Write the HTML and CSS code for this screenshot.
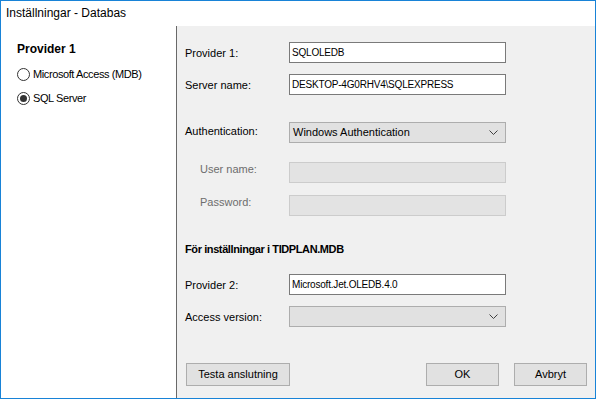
FILE: index.html
```html
<!DOCTYPE html>
<html lang="sv">
<head>
<meta charset="utf-8">
<title>Inställningar - Databas</title>
<link rel="stylesheet" href="styles.css">
</head>
<body>
<div class="window">
  <div class="titlebar">Inställningar - Databas</div>
  <div class="content">
    <div class="left">
      <div class="group-title">Provider 1</div>
      <div class="radio"><span class="circle"></span><span>Microsoft Access (MDB)</span></div>
      <div class="radio checked"><span class="circle"></span><span>SQL Server</span></div>
    </div>
    <div class="right">
      <div class="row r1"><span class="lbl">Provider 1:</span><div class="field input">SQLOLEDB</div></div>
      <div class="row r2"><span class="lbl">Server name:</span><div class="field input">DESKTOP-4G0RHV4\SQLEXPRESS</div></div>
      <div class="row r3"><span class="lbl">Authentication:</span><div class="field select">Windows Authentication<svg class="chev" width="9" height="5" viewBox="0 0 9 5"><path d="M0.5 0.5 L4.5 4.5 L8.5 0.5" fill="none" stroke="#404040" stroke-width="1"/></svg></div></div>
      <div class="row r4"><span class="lbl disabled">User name:</span><div class="field input-disabled"></div></div>
      <div class="row r5"><span class="lbl disabled">Password:</span><div class="field input-disabled"></div></div>
      <div class="heading">För inställningar i TIDPLAN.MDB</div>
      <div class="row r6"><span class="lbl">Provider 2:</span><div class="field input">Microsoft.Jet.OLEDB.4.0</div></div>
      <div class="row r7"><span class="lbl">Access version:</span><div class="field select"><svg class="chev" width="9" height="5" viewBox="0 0 9 5"><path d="M0.5 0.5 L4.5 4.5 L8.5 0.5" fill="none" stroke="#404040" stroke-width="1"/></svg></div></div>
      <div class="buttons">
        <div class="btn btn-test">Testa anslutning</div>
        <div class="btn btn-ok">OK</div>
        <div class="btn btn-cancel">Avbryt</div>
      </div>
    </div>
  </div>
</div>
</body>
</html>
```
FILE: styles.css
```css
html, body {
  margin: 0;
  padding: 0;
}
body {
  font-family: "Liberation Sans", Arial, sans-serif;
  color: #000;
}
.window {
  width: 596px;
  height: 399px;
  box-sizing: border-box;
  border: 1px solid #1883d7;
  display: flex;
  flex-direction: column;
  background: #fff;
}
.titlebar {
  height: 25px;
  line-height: 25px;
  padding-left: 5px;
  font-size: 12px;
  flex: none;
}
.content {
  flex: 1;
  display: flex;
  min-height: 0;
}
.left {
  flex: none;
  background: #fff;
  border-right: 1px solid #696969;
  padding: 16px 0 0 16px;
  box-sizing: border-box;
  width: 176px;
}
.group-title {
  font-weight: bold;
  font-size: 12px;
  line-height: 14px;
  height: 14px;
}
.radio {
  display: flex;
  align-items: center;
  height: 14px;
  font-size: 11px;
  letter-spacing: -0.4px;
  margin-top: 10px;
}
.group-title + .radio {
  margin-top: 11px;
}
.circle {
  width: 13px;
  height: 13px;
  box-sizing: border-box;
  border: 1px solid #333;
  border-radius: 50%;
  background: #fff;
  margin-right: 3px;
  position: relative;
  flex: none;
}
.radio.checked .circle::after {
  content: "";
  position: absolute;
  left: 2px;
  top: 2px;
  width: 7px;
  height: 7px;
  border-radius: 50%;
  background: #333;
}
.right {
  flex: 1;
  background: #f0f0f0;
  padding: 16px 8px 0 8px;
  display: flex;
  flex-direction: column;
}
.row {
  display: flex;
  align-items: center;
  height: 21px;
}
.r2 { margin-top: 11px; }
.r3 { margin-top: 27px; }
.r4 { margin-top: 19px; }
.r5 { margin-top: 12px; }
.r6 { margin-top: 18px; }
.r7 { margin-top: 11px; }
.r3 .lbl { margin-bottom: 4px; }
.r4 .lbl { margin-bottom: 7px; }
.r5 .lbl { margin-bottom: 8px; }
.lbl {
  width: 104px;
  flex: none;
  font-size: 11px;
  box-sizing: border-box;
}
.lbl.disabled {
  color: #6d6d6d;
  padding-left: 15px;
}
.field {
  width: 217px;
  height: 21px;
  box-sizing: border-box;
  font-size: 10px;
  line-height: 19px;
  padding-left: 2px;
  letter-spacing: -0.2px;
  position: relative;
}
.input {
  background: #fff;
  border: 1px solid #7a7a7a;
}
.input-disabled {
  background: #e3e3e3;
  border: 1px solid #cccccc;
}
.select {
  background: #e1e1e1;
  border: 1px solid #adadad;
  padding-left: 3px;
  font-size: 11px;
  letter-spacing: 0;
}
.chev {
  position: absolute;
  right: 7px;
  top: 7px;
}
.heading {
  margin-top: 27px;
  height: 13px;
  line-height: 13px;
  font-size: 11px;
  font-weight: bold;
  letter-spacing: -0.4px;
}
.buttons {
  display: flex;
  margin-top: 36px;
}
.btn {
  height: 23px;
  box-sizing: border-box;
  border: 1px solid #adadad;
  background: #e1e1e1;
  font-size: 11px;
  line-height: 21px;
  text-align: center;
}
.btn-test {
  width: 104px;
  margin-left: 1px;
}
.btn-ok {
  width: 73px;
  margin-left: auto;
}
.btn-cancel {
  width: 73px;
  margin-left: 15px;
}
```
